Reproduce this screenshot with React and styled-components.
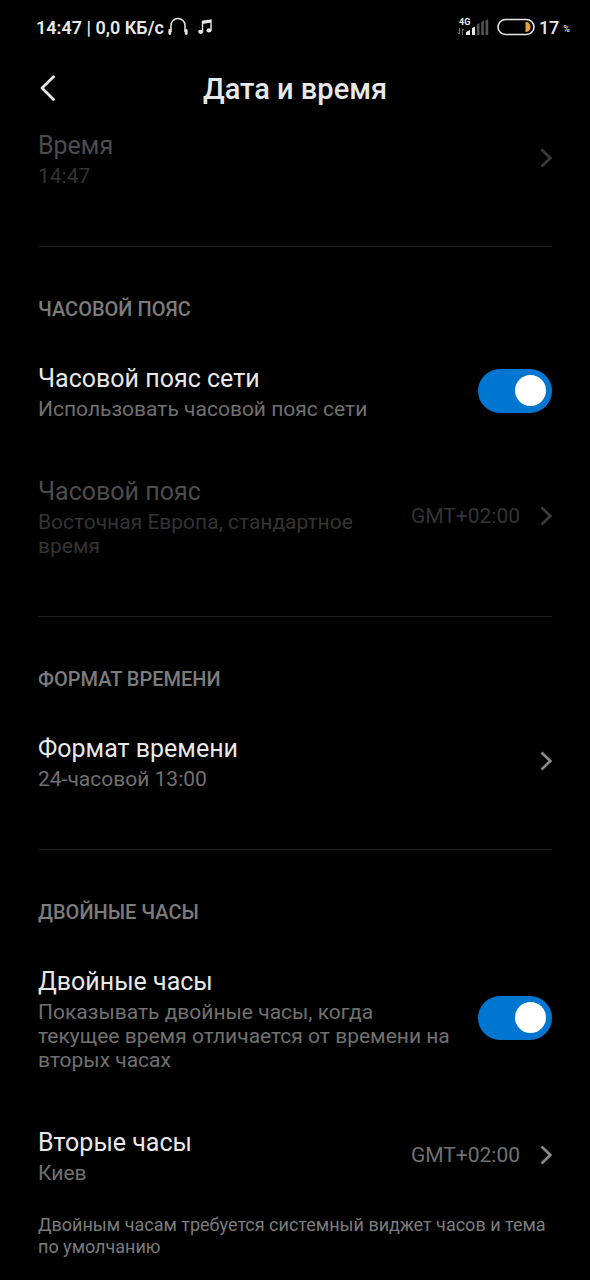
import React, { useState } from "react";
import styled, { createGlobalStyle } from "styled-components";

const GlobalStyle = createGlobalStyle`
  * {
    box-sizing: border-box;
  }
  body {
    margin: 0;
    background: #000;
    color: #e8e8e8;
    font-family: Roboto, "Noto Sans", sans-serif;
  }
`;

const StatusBar = styled.div`
  display: flex;
  align-items: center;
  justify-content: space-between;
  height: 54px;
  padding: 0 20px 0 36px;
  font-size: 18px;
  font-weight: 600;
`;

const StatusGroup = styled.div`
  display: flex;
  align-items: center;
  gap: ${(props) => props.$gap}px;
`;

const Percent = styled.span`
  font-size: 9px;
  font-weight: 500;
  padding-top: 4px;
`;

const Battery = styled.span`
  font-size: 18px;
  font-weight: 500;
`;

const TopBar = styled.header`
  display: grid;
  grid-template-columns: 24px 1fr 24px;
  align-items: center;
  height: 70px;
  padding: 0 36px;
`;

const BackButton = styled.button`
  display: flex;
  padding: 0;
  border: 0;
  background: none;
  color: #e8e8e8;
`;

const PageTitle = styled.h1`
  margin: 0;
  font-size: 29px;
  font-weight: 500;
  line-height: 38px;
  text-align: center;
`;

const Page = styled.main`
  padding: 3px 38px 20px;
`;

const Section = styled.section`
  display: flex;
  flex-direction: column;
  gap: 52px;
  & + & {
    margin-top: 58px;
    padding-top: 50px;
    border-top: 1px solid #1c1c1c;
  }
`;

const SectionTitle = styled.h2`
  margin: 0 0 -13px;
  color: #7c7c7c;
  font-size: 20px;
  font-weight: 500;
  line-height: 24px;
  text-transform: uppercase;
`;

const LinkRow = styled.button`
  display: flex;
  align-items: center;
  width: 100%;
  padding: 0;
  border: 0;
  background: none;
  color: inherit;
  font-family: inherit;
  text-align: left;
`;

const ToggleRow = styled.label`
  display: flex;
  align-items: center;
  gap: 24px;
`;

const RowText = styled.span`
  flex: 1;
  display: flex;
  flex-direction: column;
`;

const RowTitle = styled.span`
  color: ${(props) => (props.$dim ? "#4c4c4c" : "#e8e8e8")};
  font-size: 25px;
  line-height: 37px;
`;

const RowNote = styled.span`
  color: ${(props) => (props.$dim ? "#343434" : "#707070")};
  font-size: 21px;
  line-height: 24px;
`;

const RowValue = styled(RowNote)`
  margin: 0 20px 0 28px;
`;

const Switch = styled.input`
  appearance: none;
  flex: none;
  display: flex;
  align-items: center;
  width: 74px;
  height: 44px;
  margin: 0;
  padding: 0 6px;
  border-radius: 22px;
  background: #333;
  &::before {
    content: "";
    width: 31px;
    height: 31px;
    border-radius: 50%;
    background: #fff;
  }
  &:checked {
    justify-content: flex-end;
    background: #0076d0;
  }
`;

const Footnote = styled.p`
  margin: 29px 0 0;
  color: #7c7c7c;
  font-size: 18px;
  line-height: 22px;
`;

function Chevron({ dim }) {
  return (
    <svg width="12" height="20" viewBox="0 0 12 20" fill="none" stroke={dim ? "#3c3c3c" : "#8a8a8a"} strokeWidth="2.6">
      <path d="M1.500 1.500 10.300 10l-8.800 8.500" />
    </svg>
  );
}

function BackIcon() {
  return (
    <svg width="24" height="28" viewBox="0 0 24 28" fill="none" stroke="currentColor" strokeWidth="2.800" strokeLinecap="round" strokeLinejoin="round">
      <path d="M17.500 1.800 6 13l11.500 11.500" />
    </svg>
  );
}

function Headphones() {
  return (
    <svg width="20" height="20" viewBox="0 0 20 20" fill="none" stroke="#e8e8e8">
      <path d="M3 15V8.500a7 7 0 0 1 14 0V15" strokeWidth="1.500" />
      <path d="M1.800 13.500v3M18.200 13.500v3" strokeWidth="2.800" strokeLinecap="round" />
    </svg>
  );
}

function MusicNote() {
  return (
    <svg width="14" height="16" viewBox="0 0 14 16">
      <path d="M4.500 12.500V2.300L13 1v10.500" fill="none" stroke="#e8e8e8" strokeWidth="1.400" />
      <path d="M4.500 2.300 13 1v2.600L4.500 5z" fill="#e8e8e8" />
      <ellipse cx="2.700" cy="12.800" rx="2.500" ry="2.100" fill="#e8e8e8" />
      <ellipse cx="11" cy="11.400" rx="2.500" ry="2.100" fill="#e8e8e8" />
    </svg>
  );
}

function Signal() {
  return (
    <svg width="32" height="20" viewBox="0 0 32 20">
      <text x="2" y="8" fill="#e8e8e8" fontSize="9" fontWeight="700">4G</text>
      <path d="M2.500 11v6M.8 15.500l1.700 1.800M5.500 18v-6M7.200 13.500l-1.700-1.800" stroke="#777" fill="none" />
      <path d="M9 18v-3l4-2v5zM15 18v-7l3-1.500V18z" fill="#e8e8e8" />
      <path d="M20 18V7.500L22.500 6v12zM24.300 18V5l2.500-1.500V18zM28.600 18V3.500L31.200 2v16z" fill="#555" />
    </svg>
  );
}

function BatteryIcon() {
  return (
    <svg width="38" height="18" viewBox="0 0 38 18">
      <rect x="1" y="1.500" width="36" height="15" rx="7.500" fill="none" stroke="#e8e8e8" strokeWidth="1.600" />
      <path d="M28.500 4h1a4 5 0 0 1 0 10h-1z" fill="#e5a234" />
    </svg>
  );
}

function LinkItem({ title, note, value, disabled }) {
  return (
    <LinkRow type="button" disabled={disabled}>
      <RowText>
        <RowTitle $dim={disabled}>{title}</RowTitle>
        <RowNote $dim={disabled}>{note}</RowNote>
      </RowText>
      {value && <RowValue $dim={disabled}>{value}</RowValue>}
      <Chevron dim={disabled} />
    </LinkRow>
  );
}

function ToggleItem({ title, note }) {
  const [on, setOn] = useState(true);

  return (
    <ToggleRow>
      <RowText>
        <RowTitle>{title}</RowTitle>
        <RowNote>{note}</RowNote>
      </RowText>
      <Switch type="checkbox" checked={on} onChange={() => setOn(!on)} />
    </ToggleRow>
  );
}

export default function App() {
  return (
    <>
      <GlobalStyle />
      <StatusBar>
        <StatusGroup $gap={4}>
          <span>14:47 | 0,0 КБ/с</span>
          <StatusGroup $gap={10}>
            <Headphones />
            <MusicNote />
          </StatusGroup>
        </StatusGroup>
        <StatusGroup $gap={4}>
          <StatusGroup $gap={8}>
            <Signal />
            <BatteryIcon />
          </StatusGroup>
          <Battery>17</Battery>
          <Percent>%</Percent>
        </StatusGroup>
      </StatusBar>
      <TopBar>
        <BackButton type="button" aria-label="Назад">
          <BackIcon />
        </BackButton>
        <PageTitle>Дата и время</PageTitle>
      </TopBar>
      <Page>
        <Section>
          <LinkItem title="Время" note="14:47" disabled />
        </Section>
        <Section>
          <SectionTitle>Часовой пояс</SectionTitle>
          <ToggleItem title="Часовой пояс сети" note="Использовать часовой пояс сети" />
          <LinkItem title="Часовой пояс" note="Восточная Европа, стандартное время" value="GMT+02:00" disabled />
        </Section>
        <Section>
          <SectionTitle>Формат времени</SectionTitle>
          <LinkItem title="Формат времени" note="24-часовой 13:00" />
        </Section>
        <Section>
          <SectionTitle>Двойные часы</SectionTitle>
          <ToggleItem
            title="Двойные часы"
            note="Показывать двойные часы, когда текущее время отличается от времени на вторых часах"
          />
          <LinkItem title="Вторые часы" note="Киев" value="GMT+02:00" />
        </Section>
        <Footnote>Двойным часам требуется системный виджет часов и тема по умолчанию</Footnote>
      </Page>
    </>
  );
}
